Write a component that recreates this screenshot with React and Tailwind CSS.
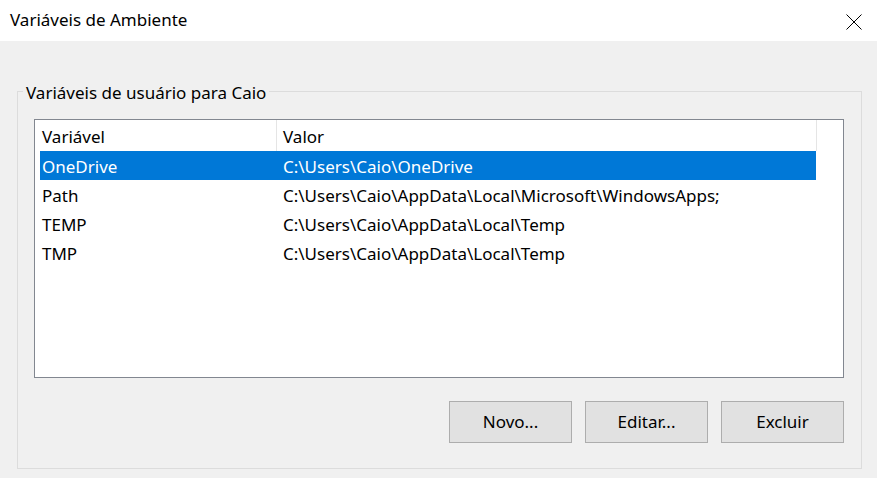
import React from "react";

const rows = [
  { name: "OneDrive", value: "C:\\Users\\Caio\\OneDrive", selected: true },
  { name: "Path", value: "C:\\Users\\Caio\\AppData\\Local\\Microsoft\\WindowsApps;" },
  { name: "TEMP", value: "C:\\Users\\Caio\\AppData\\Local\\Temp" },
  { name: "TMP", value: "C:\\Users\\Caio\\AppData\\Local\\Temp" },
];

function WinButton({ children }) {
  return (
    <button
      type="button"
      className="w-[123px] h-[42px] bg-[#e1e1e1] border border-[#adadad] text-black"
    >
      {children}
    </button>
  );
}

export default function App() {
  return (
    <div
      className="w-[877px] h-[478px] bg-[#f0f0f0] text-[17px] text-black overflow-hidden"
      style={{ fontFamily: '"Noto Sans", "Open Sans", sans-serif' }}
    >
      {/* title bar */}
      <div className="h-[41px] bg-white flex items-center justify-between pl-[10px] pr-[15px]">
        <span className="text-[17px] -mt-[2px]">Variáveis de Ambiente</span>
        <svg width="16" height="16" viewBox="0 0 16 16" className="mt-[2px]">
          <path d="M0.5 0.5 L15.5 15.5 M15.5 0.5 L0.5 15.5" stroke="#000" strokeWidth="1" fill="none" />
        </svg>
      </div>

      <div className="pl-[17px] pr-[15px] pt-[40px]">
        <fieldset className="border border-[#dcdcdc] h-[388px] pl-[16px] pr-[17px] pt-[18px]">
          <legend className="-ml-[11px] px-[3px] leading-[20px]">
            <span className="relative top-[2px]">Variáveis de usuário para Caio</span>
          </legend>

          {/* list view */}
          <div className="h-[259px] bg-white border border-[#828790]">
            <div className="flex h-[31px]">
              <div className="w-[241px] pl-[7px] pt-[3px] flex items-center">Variável</div>
              <div className="w-px bg-[#e5e5e5]" />
              <div className="w-[539px] pl-[6px] pt-[3px] flex items-center">Valor</div>
              <div className="w-px bg-[#e5e5e5]" />
            </div>
            <div className="pl-[5px]">
              {rows.map((r) => (
                <div
                  key={r.name}
                  className={
                    "flex h-[29px] w-[776px] items-center pt-[2px] " +
                    (r.selected ? "bg-[#0078d7] text-white" : "")
                  }
                >
                  <div className="w-[243px] pl-[2px]">{r.name}</div>
                  <div>{r.value}</div>
                </div>
              ))}
            </div>
          </div>

          <div className="flex justify-end gap-[13px] mt-[23px]">
            <WinButton>Novo...</WinButton>
            <WinButton>Editar...</WinButton>
            <WinButton>Excluir</WinButton>
          </div>
        </fieldset>
      </div>
    </div>
  );
}
